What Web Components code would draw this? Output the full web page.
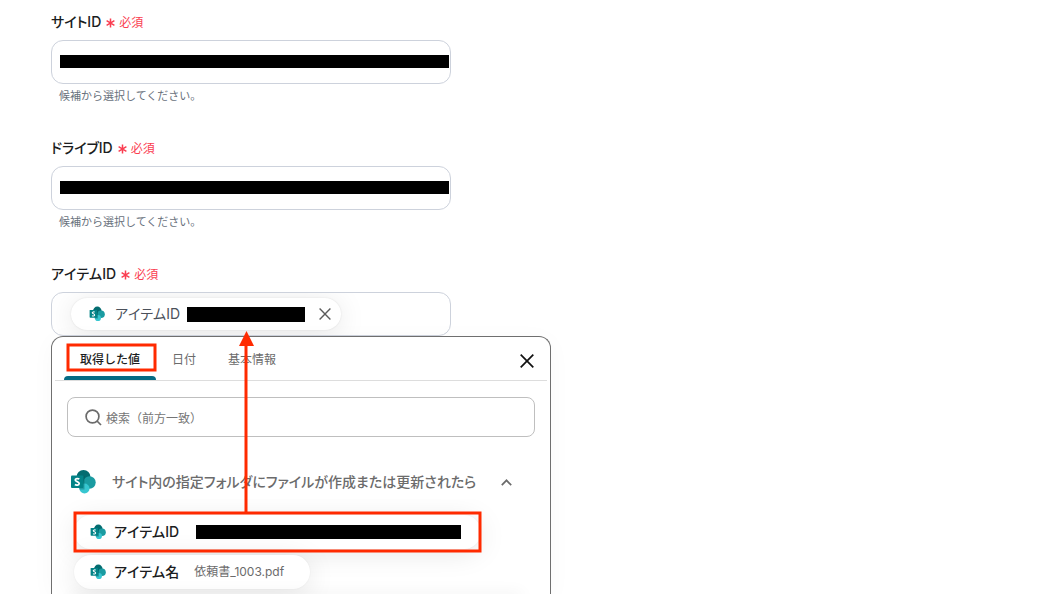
<!DOCTYPE html>
<html lang="ja">
<head>
<meta charset="utf-8">
<meta name="viewport" content="width=device-width, initial-scale=1">
<title>アイテムID</title>
<style>
	body {
		margin: 0;
		background: #fff;
		color: #1b1d21;
		font: 14px/20px Inter, "Noto Sans CJK JP", sans-serif;
		font-feature-settings: "palt", "kern" 0;
	}
</style>
</head>
<body>
<action-form></action-form>

<script>
(function() {
	// every element gets its template cloned into an open root
	function define(name, html, setup) {
		var template = document.createElement("template");
		template.innerHTML = html;
		customElements.define(name, class extends HTMLElement {
			constructor() {
				super();
				this.attachShadow({mode: "open"}).appendChild(template.content.cloneNode(true));
			}
			connectedCallback() {
				if(setup) {
					setup(this, this.shadowRoot);
				}
			}
		});
	}

	define("sharepoint-icon", `
		<style>
		:host {
			display: block;
			flex: none;
			width: var(--size, 16px);
			height: var(--size, 16px);
		}
		svg {
			display: block;
			width: 100%;
			height: 100%;
		}
		</style>
		<svg viewBox="0 0 26 26" aria-hidden="true">
			<circle cx="13.500" cy="8" r="7" fill="#036c70"/>
			<circle cx="19.500" cy="13.500" r="6.200" fill="#1a9ba1"/>
			<circle cx="14.500" cy="19.500" r="5" fill="#37c6d0"/>
			<path d="M9 7h5.500v13.500H9z" fill="#024b4e" opacity=".35"/>
			<rect x="1" y="6.500" width="12.500" height="12.500" rx="1" fill="#038387"/>
			<path d="M9.300 10.100C8.300 9.300 5.200 9.200 5.200 11.100C5.200 12.900 9.200 12.400 9.200 14.500C9.200 16.500 6 16.400 4.900 15.500" fill="none" stroke="#fff" stroke-width="1.700"/>
		</svg>
	`);

	define("form-field", `
		<style>
		:host {
			display: block;
			margin-bottom: 34px;
		}
		.head {
			display: flex;
			align-items: center;
			gap: 5px;
			height: 20px;
			margin-bottom: 8px;
		}
		label {
			font-weight: 500;
		}
		.req {
			display: flex;
			align-items: center;
			gap: 4px;
			padding-top: 2px;
			color: #fa3e51;
			font-size: 12px;
			font-feature-settings: normal;
		}
		.req svg {
			width: 9px;
			height: 10px;
		}
		input {
			display: block;
			box-sizing: border-box;
			width: 100%;
			height: 44px;
			padding: 0 8px;
			border: 1px solid #cdd2dc;
			border-radius: 12px;
			background: linear-gradient(#000, #000) 8px 14px / calc(100% - 9px) 13px no-repeat #fff;
			font: inherit;
		}
		.box {
			display: flex;
			align-items: center;
			box-sizing: border-box;
			height: 44px;
			padding: 0 19px;
			border: 1px solid #cdd2dc;
			border-radius: 12px;
			overflow: hidden;
		}
		.box input {
			flex: 1;
			min-width: 0;
			height: 20px;
			border: 0;
			background: none;
		}
		.hint {
			margin: 4px 0 0 8px;
			color: #68717c;
			font-size: 11px;
			line-height: 16px;
			font-feature-settings: normal;
		}
		:host([last]) {
			margin-bottom: 0;
		}
		</style>
		<div class="head">
			<label for="value"></label>
			<span class="req">
				<svg viewBox="0 0 9 10" aria-hidden="true"><path d="M4.500 0.500v9M0.600 2.700l7.800 4.600M8.400 2.700l-7.800 4.600" stroke="#fa3e51" stroke-width="1.500"/></svg>
				必須
			</span>
		</div>
	`, function(host, root) {
		root.querySelector("label").textContent = host.getAttribute("label");
		var hint = host.getAttribute("hint");
		var rest = document.createElement("template");
		rest.innerHTML = host.hasAttribute("chips")
			? `<div class="box"><slot></slot><input id="value" type="text"></div>`
			: `<input id="value" type="text">`;
		root.appendChild(rest.content);
		if(hint) {
			var p = document.createElement("p");
			p.className = "hint";
			p.textContent = hint;
			root.appendChild(p);
		}
	});

	define("value-chip", `
		<style>
		:host {
			display: flex;
			align-items: center;
			box-sizing: border-box;
			height: 32px;
			padding: 0 10px 0 18px;
			border-radius: 16px;
			background: #fff;
			box-shadow: 0 0 2px rgba(0, 0, 0, .1), 0 4px 28px rgba(0, 0, 0, .1);
			color: #4b515b;
		}
		.name {
			margin: 0 7px 0 10px;
			white-space: nowrap;
		}
		.mask {
			width: 118px;
			height: 15px;
			background: #000;
		}
		button {
			display: flex;
			margin-left: 14px;
			padding: 0;
			border: 0;
			background: none;
		}
		</style>
		<sharepoint-icon></sharepoint-icon>
		<span class="name"><slot></slot></span>
		<span class="mask"></span>
		<button type="button" aria-label="削除">
			<svg width="12" height="12" viewBox="0 0 12 12"><path d="M.6.6l10.800 10.800M11.400.6L.6 11.400" stroke="#5c5c5c" stroke-width="1.400"/></svg>
		</button>
	`);

	define("value-option", `
		<style>
		:host {
			display: flex;
		}
		button {
			display: flex;
			align-items: center;
			height: 34px;
			padding: 0 20px 0 16px;
			border: 0;
			border-radius: 17px;
			background: #fff;
			box-shadow: 0 0 2px rgba(0, 0, 0, .06), 0 4px 28px rgba(0, 0, 0, .1);
			color: inherit;
			font: inherit;
			font-feature-settings: inherit;
		}
		.name {
			margin: 0 15px 0 8px;
			font-weight: 500;
		}
		.value {
			padding-right: 6px;
			color: #6b6b6b;
			font-size: 12px;
			font-feature-settings: normal;
		}
		.mask {
			width: 265px;
			height: 14px;
			margin-left: 2px;
			background: #000;
		}
		</style>
		<button type="button">
			<sharepoint-icon></sharepoint-icon>
			<span class="name"></span>
			<span class="value"><slot></slot></span>
		</button>
	`, function(host, root) {
		root.querySelector(".name").textContent = host.getAttribute("name");
		if(host.hasAttribute("masked")) {
			root.querySelector(".value").className = "mask";
		}
	});

	define("value-picker", `
		<style>
		:host {
			display: flex;
			flex-direction: column;
			position: relative;
			box-sizing: border-box;
			max-width: 500px;
			border: 1px solid #6f6f6f;
			border-bottom: 0;
			border-radius: 12px 12px 0 0;
			background: #fff;
			box-shadow: 0 4px 24px rgba(0, 0, 0, .03);
		}
		button {
			padding: 0;
			border: 0;
			background: none;
			color: #6b6b6b;
			font: inherit;
			font-feature-settings: inherit;
		}
		.tabs {
			display: flex;
			margin: 0 3px;
			padding: 0 12px 0 9px;
			border-bottom: 1px solid #ddd;
			font-size: 12px;
			font-feature-settings: normal;
		}
		.tabs button {
			height: 43px;
		}
		.tabs button[role=tab] {
			display: flex;
			flex-direction: column;
			align-items: center;
			padding-top: 13px;
		}
		.tabs span {
			padding: 0 16px;
		}
		.tabs button[aria-selected=true] {
			color: #1b1d21;
			font-weight: 500;
		}
		.tabs button[aria-selected=true]::after {
			content: "";
			width: 100%;
			height: 4px;
			margin-top: auto;
			border-radius: 4px 4px 0 0;
			background: #056b84;
		}
		.tabs .close {
			display: flex;
			align-items: center;
			margin-left: auto;
			padding: 4px 1px 0 0;
		}
		.search {
			display: flex;
			align-items: center;
			gap: 4px;
			height: 38px;
			margin: 16px 15px 28px;
			padding: 0 17px;
			border: 1px solid #bfbfbf;
			border-radius: 8px;
		}
		.search svg {
			flex: none;
		}
		.search input {
			flex: 1;
			min-width: 0;
			padding: 4px 0 0;
			border: 0;
			outline: 0;
			background: none;
			font: inherit;
			font-size: 12px;
			font-feature-settings: normal;
		}
		.search input::placeholder {
			color: #757575;
			opacity: 1;
		}
		.group {
			display: flex;
			align-items: center;
			height: 34px;
			margin-left: 18px;
			font-weight: 500;
			--size: 26px;
		}
		.group span {
			margin: 0 25px 0 16px;
		}
		/* the list is cut at the window's edge */
		.list {
			display: flex;
			flex: 1;
			flex-direction: column;
			gap: 6px;
			min-height: 0;
			padding: 16px 30px 0 22px;
			overflow: hidden;
		}
		.next {
			flex: 1;
			border-radius: 17px;
			box-shadow: 0 2px 16px 2px rgba(0, 0, 0, .12);
		}
		.marks {
			position: absolute;
			left: -1px;
			top: -6px;
			pointer-events: none;
		}
		</style>
		<div class="tabs" role="tablist">
			<button type="button" role="tab" aria-selected="true"><span>取得した値</span></button>
			<button type="button" role="tab" aria-selected="false"><span>日付</span></button>
			<button type="button" role="tab" aria-selected="false"><span>基本情報</span></button>
			<button type="button" class="close" aria-label="閉じる">
				<svg width="14" height="14" viewBox="0 0 14 14"><path d="M.7.7l12.600 12.600M13.300.7L.7 13.300" stroke="#111" stroke-width="1.700"/></svg>
			</button>
		</div>
		<div class="search">
			<svg width="17" height="17" viewBox="0 0 17 17" aria-hidden="true"><circle cx="7.500" cy="7.500" r="6.400" fill="none" stroke="#6b6b6b" stroke-width="1.700"/><path d="M12 12l4 4" stroke="#6b6b6b" stroke-width="1.700"/></svg>
			<input type="text" aria-label="検索" placeholder="検索（前方一致）">
		</div>
		<button type="button" class="group" aria-expanded="true">
			<sharepoint-icon></sharepoint-icon>
			<span>サイト内の指定フォルダにファイルが作成または更新されたら</span>
			<svg width="11" height="7" viewBox="0 0 11 7" aria-hidden="true"><path d="M.8 6.200L5.500 1.300l4.700 4.900" fill="none" stroke="#6b6b6b" stroke-width="1.700"/></svg>
		</button>
		<div class="list">
			<value-option name="アイテムID" masked></value-option>
			<value-option name="アイテム名">依頼書_1003.pdf</value-option>
			<div class="next"></div>
		</div>
		<svg class="marks" width="440" height="230" viewBox="0 0 440 230" fill="none" stroke="#ff2a00" stroke-width="3" aria-hidden="true">
			<rect x="17" y="14" width="87" height="25"/>
			<rect x="24" y="182" width="405" height="38"/>
			<path d="M195 181V14"/>
			<path d="M195.500 0l7.500 15h-15z" fill="#ff2a00" stroke="none"/>
		</svg>
	`);

	define("action-form", `
		<style>
		:host {
			display: block;
			box-sizing: border-box;
			height: 100vh;
			padding: 12px 40px 0 51px;
			overflow: hidden;
		}
		form {
			display: flex;
			flex-direction: column;
			height: 100%;
		}
		form-field {
			flex: none;
			max-width: 400px;
		}
		value-picker {
			flex: 1;
			width: 100%;
			min-height: 0;
		}
		</style>
		<form>
			<form-field label="サイトID" hint="候補から選択してください。"></form-field>
			<form-field label="ドライブID" hint="候補から選択してください。"></form-field>
			<form-field label="アイテムID" chips last><value-chip>アイテムID</value-chip></form-field>
			<value-picker></value-picker>
		</form>
	`);
})();
</script>
</body>
</html>
